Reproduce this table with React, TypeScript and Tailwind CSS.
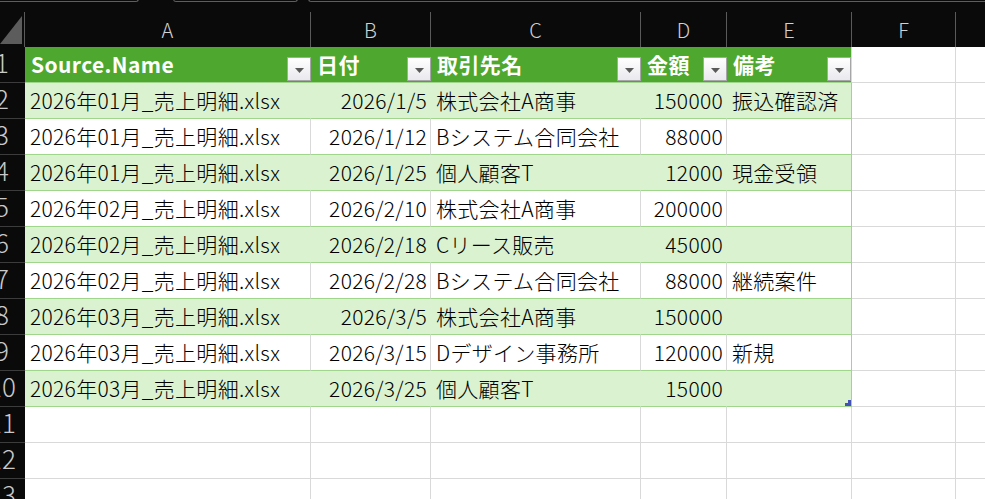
import type { ReactNode } from "react";

type Col = { key: string; w: string; align: "left" | "right" };

const COLS: Col[] = [
  { key: "A", w: "w-[286px]", align: "left" },
  { key: "B", w: "w-[120px]", align: "right" },
  { key: "C", w: "w-[210px]", align: "left" },
  { key: "D", w: "w-[86px]", align: "right" },
  { key: "E", w: "w-[125px]", align: "left" },
];

const HEADERS = ["Source.Name", "日付", "取引先名", "金額", "備考"];

const ROWS: string[][] = [
  ["2026年01月_売上明細.xlsx", "2026/1/5", "株式会社A商事", "150000", "振込確認済"],
  ["2026年01月_売上明細.xlsx", "2026/1/12", "Bシステム合同会社", "88000", ""],
  ["2026年01月_売上明細.xlsx", "2026/1/25", "個人顧客T", "12000", "現金受領"],
  ["2026年02月_売上明細.xlsx", "2026/2/10", "株式会社A商事", "200000", ""],
  ["2026年02月_売上明細.xlsx", "2026/2/18", "Cリース販売", "45000", ""],
  ["2026年02月_売上明細.xlsx", "2026/2/28", "Bシステム合同会社", "88000", "継続案件"],
  ["2026年03月_売上明細.xlsx", "2026/3/5", "株式会社A商事", "150000", ""],
  ["2026年03月_売上明細.xlsx", "2026/3/15", "Dデザイン事務所", "120000", "新規"],
  ["2026年03月_売上明細.xlsx", "2026/3/25", "個人顧客T", "15000", ""],
];

function RowHead({ n }: { n: number }) {
  // numbers are clipped on the left, like a scrolled sheet
  return (
    <div className="flex h-full w-[25px] shrink-0 overflow-hidden border-b border-[#3c3c3c] bg-[#0a0a0a]">
      <div className="-ml-[28px] flex w-[60px] shrink-0 items-center justify-center pb-[6px] text-[26px] font-light leading-none text-[#c9c9c9]">
        {n}
      </div>
    </div>
  );
}

function FilterButton() {
  return (
    <div className="mb-[1px] flex h-[24px] w-[24px] shrink-0 items-center justify-center border border-[#a6a6a6] bg-gradient-to-b from-white to-[#e9e9ee]">
      <svg width="9" height="5" viewBox="0 0 9 5" className="mt-[3px]">
        <path d="M0 0h9L4.5 5z" fill="#595959" />
      </svg>
    </div>
  );
}

function Row({ n, children }: { n: number; children: ReactNode }) {
  return (
    <div className="flex h-[36px] shrink-0">
      <RowHead n={n} />
      {children}
    </div>
  );
}

function BlankTail() {
  return (
    <>
      <div className="h-full w-[104px] shrink-0 border-r border-b border-[#d9d9d9] bg-white" />
      <div className="h-full flex-1 border-b border-[#d9d9d9] bg-white" />
    </>
  );
}

export default function App() {
  return (
    <div className="flex h-[499px] w-[985px] flex-col overflow-hidden bg-[#0a0a0a] font-['Noto_Sans_CJK_JP','Noto_Sans',sans-serif]">
      {/* sheet tabs peeking at the top */}
      <div className="flex h-[12px] shrink-0 items-start">
        <div className="h-[3px] w-[139px] shrink-0 -translate-y-[1px] rounded-br-[4px] border-r border-b border-[#5e5e5e]" />
        <div className="ml-[34px] h-[3px] w-[125px] shrink-0 -translate-y-[1px] rounded-b-[4px] border-x border-b border-[#5e5e5e]" />
        <div className="ml-[10px] h-[3px] flex-1 -translate-y-[1px] rounded-bl-[4px] border-l border-b border-[#5e5e5e]" />
      </div>

      {/* column letters */}
      <div className="flex h-[35px] shrink-0">
        <div className="relative h-full w-[25px] shrink-0 border-r border-[#5a5a5a]">
          <svg width="23" height="29" viewBox="0 0 23 29" className="absolute left-0 top-[4px]">
            <path d="M0 28L22 0V28z" fill="#5c5c5c" />
          </svg>
        </div>
        {COLS.map((c) => (
          <div
            key={c.key}
            className={`${c.w} flex h-full shrink-0 items-center justify-center border-r border-[#5a5a5a] text-[20px] font-light text-[#d2d2d2]`}
          >
            {c.key}
          </div>
        ))}
        <div className="flex h-full w-[104px] shrink-0 items-center justify-center border-r border-[#5a5a5a] text-[20px] font-light text-[#d2d2d2]">
          F
        </div>
        <div className="h-full flex-1" />
      </div>

      {/* table header */}
      <Row n={1}>
        {COLS.map((c, i) => (
          <div
            key={c.key}
            className={`${c.w} flex h-full shrink-0 items-end justify-between border-b border-[#9fd68c] bg-[#4ea72e] pl-[6px] ${
              i === COLS.length - 1 ? "border-r border-r-[#d9d9d9]" : ""
            }`}
          >
            <span className="self-center text-[21px] font-bold leading-none tracking-[0.4px] text-white">{HEADERS[i]}</span>
            <FilterButton />
          </div>
        ))}
        <BlankTail />
      </Row>

      {ROWS.map((r, ri) => {
        const band = ri % 2 === 0;
        return (
          <Row key={ri} n={ri + 2}>
            {COLS.map((c, i) => {
              const last = i === COLS.length - 1;
              return (
                <div
                  key={c.key}
                  className={`${c.w} flex h-full shrink-0 items-center overflow-hidden whitespace-nowrap border-r border-b border-b-[#9fd68c] text-[21px] font-light leading-none tracking-[0.3px] text-black ${
                    band ? "bg-[#daf2d0]" : "bg-white"
                  } ${last ? "border-r-[#9fd68c]" : band ? "border-r-[#daf2d0]" : "border-r-[#d9d9d9]"} ${
                    c.align === "right" ? "justify-end pr-[3px]" : "pl-[5px]"
                  } ${last && ri === ROWS.length - 1 ? "relative" : ""}`}
                >
                  {r[i]}
                  {last && ri === ROWS.length - 1 && (
                    <svg width="6" height="6" viewBox="0 0 6 6" className="absolute right-0 bottom-0">
                      <path d="M3 0h3v6H0V3h3z" fill="#4452b8" />
                    </svg>
                  )}
                </div>
              );
            })}
            <BlankTail />
          </Row>
        );
      })}

      {[11, 12, 13].map((n) => (
        <Row key={n} n={n}>
          {COLS.map((c) => (
            <div key={c.key} className={`${c.w} h-full shrink-0 border-r border-b border-[#d9d9d9] bg-white`} />
          ))}
          <BlankTail />
        </Row>
      ))}
    </div>
  );
}
